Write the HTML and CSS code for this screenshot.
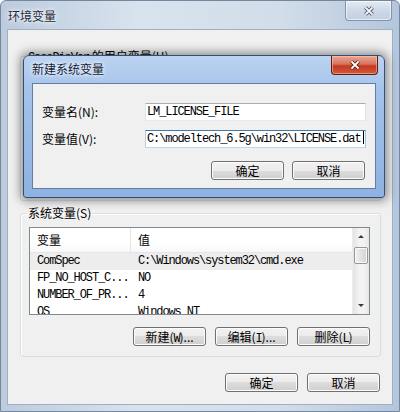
FILE: index.html
```html
<!DOCTYPE html>
<html lang="zh-CN">
<head>
    <meta charset="UTF-8">
    <title>环境变量</title>
    <link rel="stylesheet" href="styles.css">
</head>
<body>
    <div class="outer">
        <div class="outer-bar">
            <span class="outer-title">环境变量</span>
            <span class="close-btn inactive">
                <svg width="12" height="10" viewBox="0 0 12 10"><path d="M2.5 1.5 L9.5 8.5 M9.5 1.5 L2.5 8.5" stroke="#4b5566" stroke-width="3.8"/><path d="M2.5 1.5 L9.5 8.5 M9.5 1.5 L2.5 8.5" stroke="#f4f6f9" stroke-width="1.8"/></svg>
            </span>
        </div>
        <div class="outer-client">
            <fieldset class="group user-group">
                <legend><span class="mono">CaseDiaVer</span> 的用户变量(U)</legend>
            </fieldset>
            <fieldset class="group sys-group">
                <legend>系统变量(S)</legend>
                <div class="listview">
                    <div class="lv-main">
                        <div class="lv-head">
                            <span class="col1">变量</span>
                            <span class="col2">值</span>
                        </div>
                        <div class="lv-row hot">
                            <span class="col1 mono">ComSpec</span>
                            <span class="col2 mono">C:\Windows\system32\cmd.exe</span>
                        </div>
                        <div class="lv-row">
                            <span class="col1 mono">FP_NO_HOST_C...</span>
                            <span class="col2 mono">NO</span>
                        </div>
                        <div class="lv-row">
                            <span class="col1 mono">NUMBER_OF_PR...</span>
                            <span class="col2 mono">4</span>
                        </div>
                        <div class="lv-row">
                            <span class="col1 mono">OS</span>
                            <span class="col2 mono">Windows_NT</span>
                        </div>
                    </div>
                    <div class="scrollbar">
                        <div class="sb-arrow"><span class="tri up"></span></div>
                        <div class="sb-thumb"></div>
                        <div class="sb-track"></div>
                        <div class="sb-arrow"><span class="tri down"></span></div>
                    </div>
                </div>
                <div class="btn-row">
                    <span class="btn">新建(<span class="mono">W</span>)...</span>
                    <span class="btn">编辑(<span class="mono">I</span>)...</span>
                    <span class="btn">删除(<span class="mono">L</span>)</span>
                </div>
            </fieldset>
            <div class="btn-row bottom">
                <span class="btn">确定</span>
                <span class="btn">取消</span>
            </div>
        </div>
    </div>

    <!-- 新建系统变量 对话框，盖在环境变量窗口上面 -->
    <div class="dialog">
        <div class="dialog-bar">
            <span class="dialog-title">新建系统变量</span>
            <span class="close-btn red">
                <svg width="12" height="10" viewBox="0 0 12 10"><path d="M2.5 1.5 L9.5 8.5 M9.5 1.5 L2.5 8.5" stroke="#5a1a10" stroke-width="3.8"/><path d="M2.5 1.5 L9.5 8.5 M9.5 1.5 L2.5 8.5" stroke="#ffffff" stroke-width="1.8"/></svg>
            </span>
        </div>
        <div class="dialog-client">
            <div class="form-row">
                <label class="form-label">变量名(N):</label>
                <div class="textbox mono">LM_LICENSE_FILE</div>
            </div>
            <div class="form-row">
                <label class="form-label">变量值(V):</label>
                <div class="textbox focus mono">C:\modeltech_6.5g\win32\LICENSE.dat<span class="caret"></span></div>
            </div>
            <div class="btn-row dialog-btns">
                <span class="btn">确定</span>
                <span class="btn">取消</span>
            </div>
        </div>
    </div>
</body>
</html>
```

FILE: styles.css
```css
* {
    box-sizing: border-box;
}
body {
    margin: 0;
    width: 400px;
    height: 412px;
    overflow: hidden;
    position: relative;
    font: 12px/14px "Noto Sans CJK SC", sans-serif;
    color: #000;
    background: #fff;
}
.mono {
    font-family: "Liberation Mono", monospace;
    font-size: 12px;
    letter-spacing: -1.1px;
}

/* outer window: 环境变量 */
.outer {
    height: 412px;
    display: flex;
    flex-direction: column;
    border: 1px solid #75879e;
    border-radius: 6px 6px 0 0;
    background: linear-gradient(to right, #bccbdd, #d9e3ee 35%, #d2dde9 70%, #b4c6dc);
    padding: 0 6px 6px;
}
.outer-bar {
    height: 28px;
    display: flex;
    align-items: flex-start;
    justify-content: space-between;
}
.outer-title {
    margin: 8px 0 0 1px;
    color: #1e2a3a;
    text-shadow: 0 0 6px #fff, 0 0 3px #fff;
}
.close-btn {
    width: 47px;
    height: 20px;
    display: flex;
    align-items: center;
    justify-content: center;
    border-radius: 0 0 4px 4px;
}
.close-btn.inactive {
    margin-right: 1px;
    border: 1px solid #8294ad;
    border-top: none;
    background: linear-gradient(#e4ebf4, #cdd9e7 50%, #c2d0e2);
    box-shadow: inset 0 0 0 1px rgba(255, 255, 255, 0.6);
}
.outer-client {
    flex: 1;
    background: #f0f0f0;
    border: 1px solid #a0afc2;
    display: flex;
    flex-direction: column;
}

/* group boxes */
.group {
    margin: 0 11px 0 12px;
    border: 1px solid #d5dfe5;
    border-radius: 3px;
    box-shadow: inset 1px 1px 0 #fff;
    padding: 8px 10px 10px 8px;
    min-inline-size: 0;
}
.group legend {
    padding: 0 1px;
    margin-left: -2px;
    line-height: 12px;
    height: 12px;
}
.user-group {
    margin-top: 20px;
    height: 151px;
}
.sys-group {
    margin-top: 6px;
}

/* list view */
.listview {
    height: 88px;
    border: 1px solid #828790;
    background: #fff;
    display: flex;
}
.lv-main {
    flex: 1;
    overflow: hidden;
}
.lv-head {
    height: 25px;
    display: flex;
    align-items: center;
    border-bottom: 1px solid #e5e5e5;
    background: linear-gradient(#fff, #fff 60%, #f7f8fa);
}
.lv-head .col1 {
    border-right: 1px solid #e5e5e5;
    height: 24px;
    line-height: 24px;
}
.lv-row {
    height: 17px;
    line-height: 17px;
    display: flex;
    white-space: nowrap;
}
.lv-row.hot {
    background: #ededed;
}
.col1 {
    width: 101px;
    padding-left: 7px;
    flex-shrink: 0;
}
.col2 {
    padding-left: 7px;
}
.scrollbar {
    width: 17px;
    display: flex;
    flex-direction: column;
    background: linear-gradient(to right, #e3e3e3, #f3f3f3 40%, #f3f3f3 70%, #e6e6e6);
    border-left: 1px solid #ececec;
}
.sb-arrow {
    height: 17px;
    display: flex;
    align-items: center;
    justify-content: center;
}
.tri {
    width: 0;
    height: 0;
    border-left: 3px solid transparent;
    border-right: 3px solid transparent;
}
.tri.up {
    border-bottom: 3px solid #3c3c3c;
}
.tri.down {
    border-top: 3px solid #3c3c3c;
}
.sb-thumb {
    height: 17px;
    margin: 2px 1px 0;
    border: 1px solid #979797;
    border-radius: 2px;
    background: linear-gradient(to right, #f1f1f1, #e2e2e2 50%, #d3d3d3);
    box-shadow: inset 0 0 0 1px #fafafa;
}
.sb-track {
    flex: 1;
}

/* buttons */
.btn-row {
    display: flex;
    justify-content: flex-end;
    gap: 9px;
    margin-top: 12px;
}
.btn-row.bottom {
    margin: 16px 12px 0 0;
}
.btn {
    width: 73px;
    height: 19px;
    line-height: 17px;
    text-align: center;
    border: 1px solid #707070;
    border-radius: 3px;
    background: linear-gradient(#f2f2f2, #ebebeb 50%, #dddddd 50%, #cfcfcf);
    box-shadow: inset 0 0 0 1px #fcfcfc;
}

/* dialog: 新建系统变量 */
.dialog {
    position: absolute;
    left: 23px;
    top: 55px;
    width: 362px;
    height: 143px;
    border: 1px solid #2f4f78;
    border-radius: 6px 6px 3px 3px;
    background: linear-gradient(#bcd3f0, #a4c2ea 25%, #8fb2e0);
    box-shadow: 0 0 10px 3px rgba(0, 0, 0, 0.4);
    display: flex;
    flex-direction: column;
    padding: 0 8px 8px;
}
.dialog-bar {
    height: 27px;
    display: flex;
    align-items: flex-start;
    justify-content: space-between;
}
.dialog-title {
    margin-top: 6px;
    color: #102038;
    text-shadow: 0 0 6px #fff, 0 0 3px #fff;
}
.close-btn.red {
    margin-right: -2px;
    height: 19px;
    border: 1px solid #5e1c10;
    border-top: none;
    background: linear-gradient(#e9a797, #d8735d 45%, #c3391f 55%, #d1583c);
    box-shadow: inset 0 0 0 1px rgba(255, 210, 200, 0.5);
}
.dialog-client {
    flex: 1;
    background: #f0f0f0;
    border: 1px solid #5f7fa8;
    padding: 19px 9px 0 9px;
}
.form-row {
    display: flex;
    align-items: center;
    height: 18px;
    margin-bottom: 9px;
}
.form-label {
    width: 103px;
    flex-shrink: 0;
}
.textbox {
    flex: 1;
    height: 18px;
    line-height: 16px;
    padding-left: 1px;
    background: #fff;
    border: 1px solid;
    border-color: #abadb3 #dbdfe6 #e3e9ef #e2e3ea;
    white-space: nowrap;
    overflow: hidden;
}
.textbox.focus {
    border-color: #3d7bad #a4c9e3 #b7d9ed #b5cfe7;
}
.caret {
    display: inline-block;
    width: 1px;
    height: 13px;
    margin-left: 2px;
    background: #000;
    vertical-align: -2px;
}
.dialog-btns {
    margin-top: 13px;
    gap: 8px;
    padding-right: 1px;
}
```
